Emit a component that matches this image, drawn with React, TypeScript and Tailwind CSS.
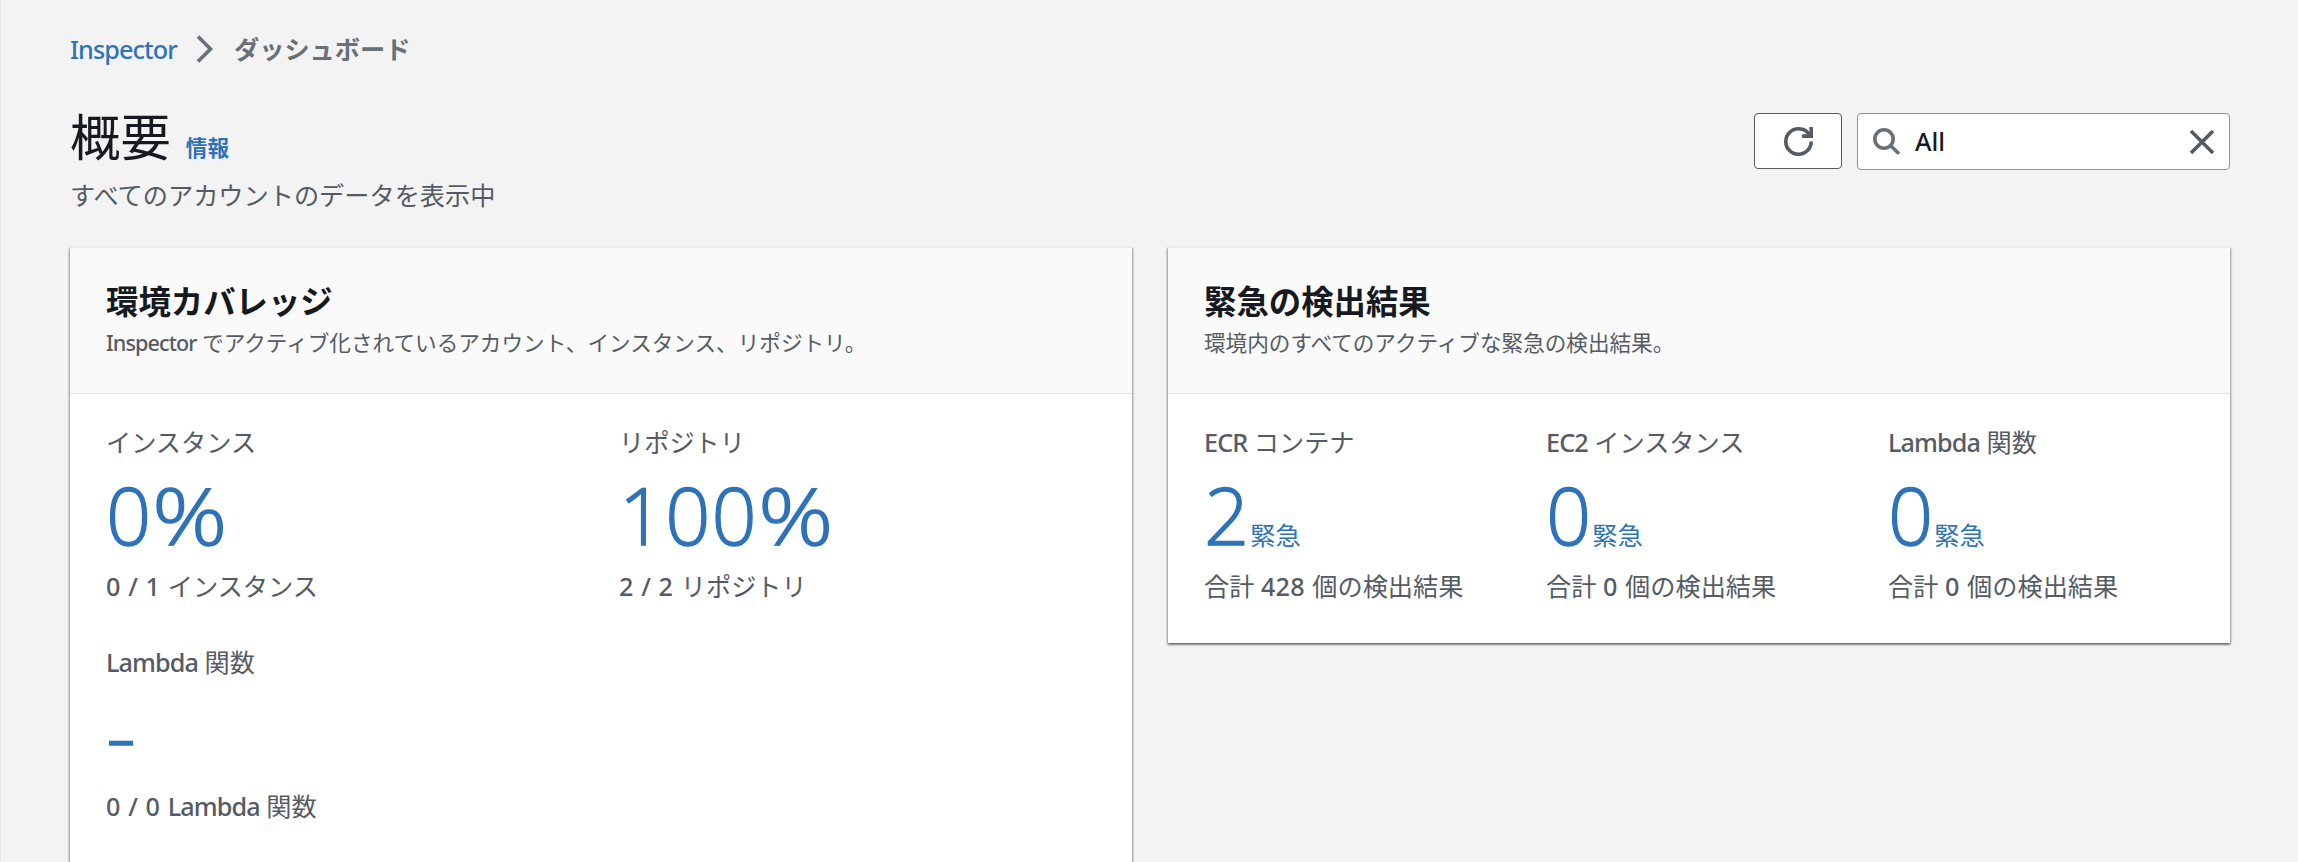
import type { ReactNode } from 'react';

type Metric = {
  label: ReactNode;
  value: string;
  sign?: string;
  unit?: string;
  total: ReactNode;
};

function En({ children }: { children: ReactNode }) {
  return <span className="font-['Noto_Sans'] font-medium tracking-[-0.9px]">{children}</span>;
}

function Num({ children }: { children: ReactNode }) {
  return <span className="font-['Noto_Sans'] font-medium tracking-[0.2px] [word-spacing:0.8px]">{children}</span>;
}

const coverage: Metric[] = [
  { label: 'インスタンス', value: '0', sign: '%', total: <><Num>0 / 1 </Num>インスタンス</> },
  { label: 'リポジトリ', value: '100', sign: '%', total: <><Num>2 / 2 </Num>リポジトリ</> },
  { label: <><En>Lambda</En> 関数</>, value: '', sign: '-', total: <><Num>0 / 0 </Num><En>Lambda</En> 関数</> },
];

const findings: Metric[] = [
  { label: <><En>ECR</En> コンテナ</>, value: '2', unit: '緊急', total: <>合計 <Num>428 </Num>個の検出結果</> },
  { label: <><En>EC2</En> インスタンス</>, value: '0', unit: '緊急', total: <>合計 <Num>0 </Num>個の検出結果</> },
  { label: <><En>Lambda</En> 関数</>, value: '0', unit: '緊急', total: <>合計 <Num>0 </Num>個の検出結果</> },
];

function MetricItem({ label, value, sign, unit, total }: Metric) {
  return (
    <div className="whitespace-nowrap text-[25.2px] leading-10 text-[#545b64]">
      <div>{label}</div>
      <a href="#" className="flex h-[104px] items-baseline text-[#2e73b8]">
        <span className="text-[79.2px] font-light leading-[105px] tracking-[1px] [-webkit-text-stroke:1.3px_#2e73b8]">
          {value}
          {sign && <span className="inline-block origin-left scale-x-[1.18]">{sign}</span>}
        </span>
        {unit && <span>{unit}</span>}
      </a>
      <div>{total}</div>
    </div>
  );
}

function Card({ title, description, children, className }: {
  title: string;
  description: ReactNode;
  children: ReactNode;
  className: string;
}) {
  return (
    <section className={`bg-white shadow-[0_2px_2px_0_rgba(0,28,36,0.35),1px_1px_2px_0_rgba(0,28,36,0.3),-1px_1px_2px_0_rgba(0,28,36,0.3)] ${className}`}>
      <header className="h-[147px] border-b border-t border-b-[#e3e7e7] border-t-[#eaeded] bg-[#fafafa] px-9 pt-[33px]">
        <h2 className="text-[32.4px] font-bold leading-10 text-[#16191f]">{title}</h2>
        <p className="text-[21.6px] leading-[43px] text-[#545b64]">{description}</p>
      </header>
      <div className="px-9 pb-9 pt-[28px]">{children}</div>
    </section>
  );
}

export default function App() {
  return (
    <div className="h-[862px] overflow-hidden border-l border-[#e6e8e8] bg-[#f3f3f3] pl-[69px] pr-[68px] pt-[29px] font-['Open_Sans','Noto_Sans_CJK_JP',sans-serif]">
      <nav className="flex h-10 items-center text-[25.2px] leading-10">
        <a href="#" className="w-[107px] text-[#2e73b8]"><En>Inspector</En></a>
        <svg className="ml-[19px] mr-5 h-7 w-[18px]" viewBox="0 0 18 28" fill="none" stroke="#687078" strokeWidth="3.6">
          <path d="M2 1.5 14.5 14 2 26.5" />
        </svg>
        <span className="font-bold text-[#687078]">ダッシュボード</span>
      </nav>

      <div className="mt-[40px] flex justify-between">
        <div>
          <h1 className="flex h-[66px] items-baseline text-[50.4px] leading-[56px] text-[#16191f]">
            概要
            <a href="#" className="ml-[15px] text-[21.6px] font-bold text-[#2e73b8]">情報</a>
          </h1>
          <p className="text-[25.2px] leading-10 text-[#545b64]">すべてのアカウントのデータを表示中</p>
        </div>

        <div className="mt-[4px] flex gap-[15px]">
          <button className="flex h-14 w-[88px] items-center justify-center rounded-[4px] border border-[#545b64] bg-white">
            <svg className="h-[29px] w-[29px]" viewBox="0 0 16 16" fill="none" stroke="#545b64" strokeWidth="2">
              <path d="M10 5h5V0" />
              <path d="M15 8a6.957 6.957 0 0 1-7 7 6.957 6.957 0 0 1-7-7 6.957 6.957 0 0 1 7-7 6.87 6.87 0 0 1 6.3 4" />
            </svg>
          </button>
          <div className="flex h-[57px] w-[373px] items-center rounded-[4px] border border-[#879596] bg-white pl-[15px] pr-[14px]">
            <svg className="h-[27px] w-[28px]" viewBox="0 0 28 27" fill="none" stroke="#687078" strokeWidth="3.6">
              <circle cx="11" cy="11" r="9.2" />
              <path d="M17.5 17.5 26 25.7" />
            </svg>
            <span className="ml-[14px] flex-1 font-['Noto_Sans'] text-[25.2px] font-medium text-[#16191f]">All</span>
            <svg className="h-[26px] w-[26px]" viewBox="0 0 26 26" fill="none" stroke="#545b64" strokeWidth="3.6">
              <path d="m2 2 22 22M24 2 2 24" />
            </svg>
          </div>
        </div>
      </div>

      <div className="mt-[32px] grid grid-cols-2 items-start gap-9">
        <Card
          className="h-[700px]"
          title="環境カバレッジ"
          description={<><En>Inspector</En> でアクティブ化されているアカウント、インスタンス、リポジトリ。</>}
        >
          <div className="grid grid-cols-2 gap-9">
            {coverage.map((item, i) => <MetricItem key={i} {...item} />)}
          </div>
        </Card>
        <Card
          className="h-[396px]"
          title="緊急の検出結果"
          description="環境内のすべてのアクティブな緊急の検出結果。"
        >
          <div className="grid grid-cols-3 gap-9">
            {findings.map((item, i) => <MetricItem key={i} {...item} />)}
          </div>
        </Card>
      </div>
    </div>
  );
}
